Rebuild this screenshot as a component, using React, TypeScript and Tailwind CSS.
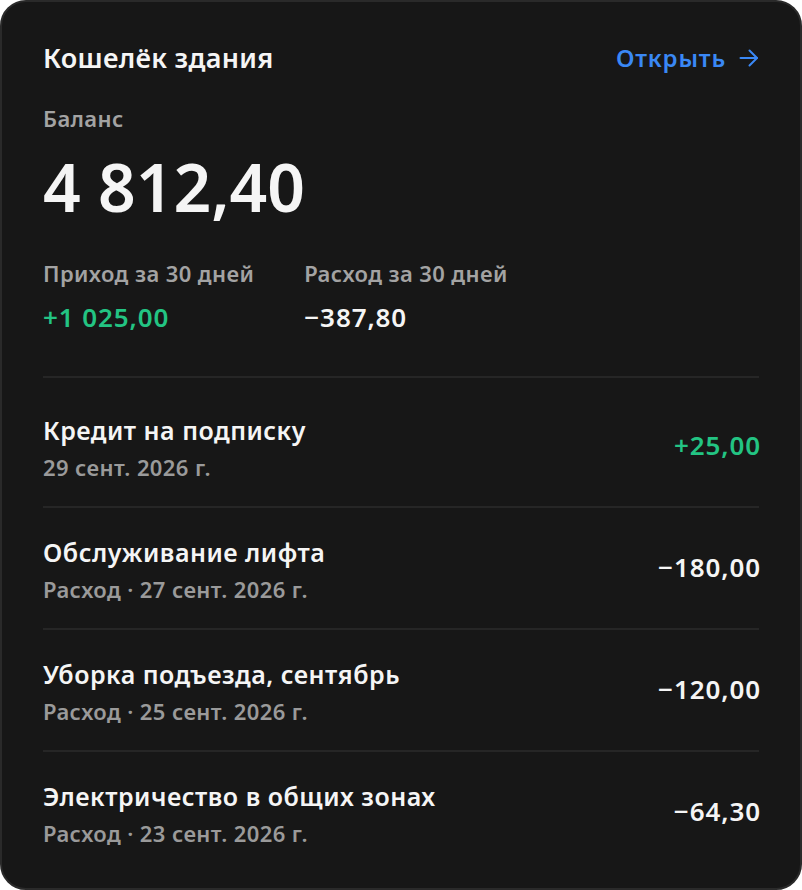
interface Entry {
  title: string;
  meta: string;
  amount: string;
  income?: boolean;
}

const entries: Entry[] = [
  { title: "Кредит на подписку", meta: "29 сент. 2026 г.", amount: "+25,00", income: true },
  { title: "Обслуживание лифта", meta: "Расход · 27 сент. 2026 г.", amount: "−180,00" },
  { title: "Уборка подъезда, сентябрь", meta: "Расход · 25 сент. 2026 г.", amount: "−120,00" },
  { title: "Электричество в общих зонах", meta: "Расход · 23 сент. 2026 г.", amount: "−64,30" },
];

export default function App() {
  return (
    <div className="min-h-screen bg-white font-['Noto_Sans',sans-serif]">
      <div className="h-[890px] w-[802px] overflow-hidden rounded-[26px] border-2 border-[#2a2a2a] bg-[#171717] pt-[39px] pr-[39px] pl-[41px] text-[#f5f5f5]">
        {/* header */}
        <div className="flex items-center justify-between pr-[2px]">
          <h1 className="text-[27px] leading-[34px] font-semibold tracking-[0.3px]">Кошелёк здания</h1>
          <a className="flex items-center gap-[13px] text-[24px] leading-[32px] font-semibold tracking-[0.8px] text-[#3a88f5]">
            Открыть
            <svg width="20" height="18" viewBox="0 0 20 18" fill="none" stroke="currentColor" strokeWidth="2" strokeLinecap="round" strokeLinejoin="round">
              <path d="M1.5 9H18" />
              <path d="M10.5 1.5L18 9L10.5 16.5" />
            </svg>
          </a>
        </div>

        {/* summary */}
        <div className="mr-[2px] border-b-2 border-[#262626] pb-[43px]">
          <p className="mt-[29px] text-[22px] leading-[28px] font-semibold tracking-[0.4px] text-[#a3a3a3]">Баланс</p>
          <p className="mt-[22px] text-[66px] leading-[64px] font-semibold">4 812,40</p>
          <div className="mt-[41px] flex gap-[50px]">
            <div>
              <p className="text-[22px] leading-[28px] font-semibold tracking-[0.4px] text-[#a3a3a3]">Приход за 30 дней</p>
              <p className="mt-[14px] text-[26px] leading-[32px] font-semibold tracking-[0.9px] text-[#23c483]">+1 025,00</p>
            </div>
            <div>
              <p className="text-[22px] leading-[28px] font-semibold tracking-[0.4px] text-[#a3a3a3]">Расход за 30 дней</p>
              <p className="mt-[14px] text-[26px] leading-[32px] font-semibold tracking-[0.9px]">−387,80</p>
            </div>
          </div>
        </div>

        {/* transactions */}
        <ul className="pt-[8px]">
          {entries.map((e, i) => (
            <li
              key={e.title}
              className={
                "mr-[2px] flex items-center justify-between pt-[28px] pb-[25px] " +
                (i < entries.length - 1 ? "border-b-2 border-[#262626]" : "")
              }
            >
              <div>
                <p className="text-[25px] leading-[32px] font-semibold tracking-[0.5px]">{e.title}</p>
                <p className="mt-[7px] text-[22px] leading-[28px] font-semibold tracking-[0.4px] text-[#9a9a9a]">{e.meta}</p>
              </div>
              <p
                className={
                  "-mr-[2px] mb-[6px] text-[26px] leading-[32px] font-semibold tracking-[0.9px] " +
                  (e.income ? "text-[#23c483]" : "text-[#f5f5f5]")
                }
              >
                {e.amount}
              </p>
            </li>
          ))}
        </ul>
      </div>
    </div>
  );
}
